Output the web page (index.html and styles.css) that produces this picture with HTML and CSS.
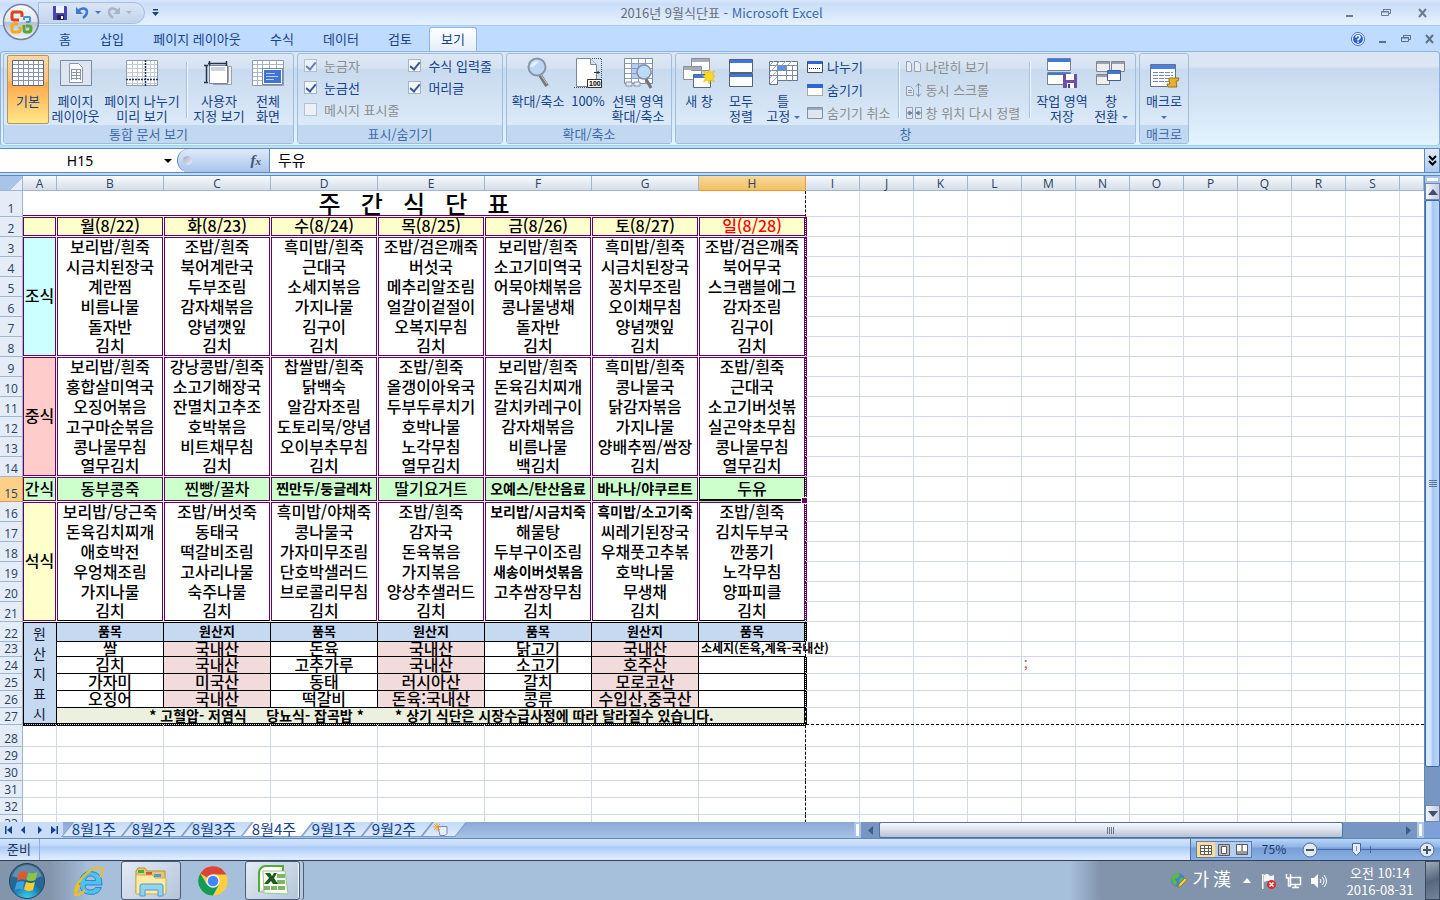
FILE: index.html
```html
<!DOCTYPE html>
<html lang="ko">

<head>
    <meta charset="UTF-8">
    <meta name="viewport" content="width=device-width, initial-scale=1.0">
    <title>2016년 9월식단표 - Microsoft Excel</title>
    <link rel="stylesheet" href="styles.css">
</head>

<body>
    <!-- title bar -->
    <header class="titlebar">
        <button class="office" aria-label="Office">
            <svg width="38" height="38" viewBox="0 0 38 38">
                <defs>
                    <linearGradient id="orb" x1="0" y1="0" x2="0" y2="1">
                        <stop offset="0" stop-color="#fdfdfe"/><stop offset=".48" stop-color="#dfe4ec"/>
                        <stop offset=".52" stop-color="#b4bfd0"/><stop offset="1" stop-color="#f4f7fb"/>
                    </linearGradient>
                </defs>
                <circle cx="19" cy="19" r="17.5" fill="url(#orb)" stroke="#75839c" stroke-width="1.5"/>
                <g fill="none" stroke-width="3">
                    <path d="M17 17h-5q-2 0-2-2v-4q0-2 2-2h6q2 0 2 2v3" stroke="#d9431a"/>
                    <path d="M22 17v-2q0-1 1-1h4q1 0 1 1v3q0 1-1 1h-3" stroke="#3b93d8" stroke-width="2"/>
                    <path d="M16 21h-4q-2 0-2 2v4q0 2 2 2h4q2 0 2-2v-3" stroke="#f0ab22"/>
                    <path d="M22 22v4q0 3 2 3h2q3 0 3-3v-1q0-2-2-2h-3" stroke="#5ca532"/>
                </g>
            </svg>
        </button>
        <div class="quick">
            <button aria-label="저장">
                <svg width="14" height="14" viewBox="0 0 14 14"><path d="M0 0h13l1 1v13H0z" fill="#4a45ae"/><path d="M3 0h8v7H3z" fill="#eef3ff"/><path d="M4 9h7v5H4z" fill="#22264f"/><path d="M8 10h2v3H8z" fill="#fff"/></svg>
            </button>
            <button aria-label="실행 취소">
                <svg width="13" height="13" viewBox="0 0 13 13"><path d="M2 5C6 1 11 2 11 6q0 3-4 6" fill="none" stroke="#3f78cf" stroke-width="2.5"/><path d="M0 1v7h7z" fill="#3f78cf"/></svg>
            </button>
            <span class="caret"></span>
            <button aria-label="다시 실행">
                <svg width="13" height="13" viewBox="0 0 13 13"><path d="M11 5C7 1 2 2 2 6q0 3 4 6" fill="none" stroke="#a9b6c8" stroke-width="2.5"/><path d="M13 1v7H6z" fill="#a9b6c8"/></svg>
            </button>
            <span class="caret off"></span>
        </div>
        <svg class="more" width="7" height="8" viewBox="0 0 7 8"><path d="M1 0h5v1.500H1zM0 3h7L3.500 7z" fill="#1c4079"/></svg>
        <h1 class="doc-title"><span>2016년 9월식단표</span> - Microsoft Excel</h1>
        <div class="win-buttons">
            <button aria-label="최소화"><svg width="8" height="12"><path d="M0 8h7v2H0z" fill="#6b7b93"/></svg></button>
            <button aria-label="이전 크기로"><svg width="10" height="12" fill="none" stroke="#6b7b93"><path d="M2.500 4V2.500h7v4H8M2 2.500h8M.500 4.500h7v4h-7zM0 5h8"/></svg></button>
            <button aria-label="닫기"><svg width="9" height="12"><path d="M1 2l7 8M8 2l-7 8" stroke="#6b7b93" stroke-width="2"/></svg></button>
        </div>
    </header>

    <!-- ribbon tabs -->
    <nav class="tabs">
        <button class="tab home">홈</button>
        <button class="tab insert">삽입</button>
        <button class="tab layout">페이지 레이아웃</button>
        <button class="tab formula">수식</button>
        <button class="tab data">데이터</button>
        <button class="tab review">검토</button>
        <button class="tab active">보기</button>
        <div class="doc-buttons">
            <button aria-label="도움말"><svg width="14" height="14" viewBox="0 0 14 14"><circle cx="7" cy="7" r="6.500" fill="#fff" stroke="#3a6cc8"/><circle cx="7" cy="7" r="5" fill="#2a62d0"/><path d="M5 5.500Q5 3.500 7 3.500T9 5.500Q9 6.500 7 7.500V8.500M7 9.500V11" fill="none" stroke="#fff" stroke-width="1.500"/></svg></button>
            <button aria-label="문서 최소화"><svg width="8" height="12"><path d="M0 8h7v2H0z" fill="#5f6f87"/></svg></button>
            <button aria-label="문서 이전 크기로"><svg width="10" height="12" fill="none" stroke="#5f6f87"><path d="M2.500 4V2.500h7v4H8M2 2.500h8M.500 4.500h7v4h-7zM0 5h8"/></svg></button>
            <button aria-label="문서 닫기"><svg width="9" height="12"><path d="M1 2l7 8M8 2l-7 8" stroke="#5f6f87" stroke-width="2"/></svg></button>
        </div>
    </nav>

    <!-- ribbon -->
    <section class="ribbon">
        <div class="group g-views">
            <div class="tools">
                <button class="big w42 on">
                    <svg width="32" height="32" viewBox="0 0 32 32"><path d="M.500 3.500h31v25H.500z" fill="#fff" stroke="#56657d"/><path d="M1 7.500h30M1 11.500h30M1 15.500h30M1 19.500h30M1 23.500h30M6.500 4v24M11.500 4v24M16.500 4v24M21.500 4v24M26.500 4v24" stroke="#8494ac" fill="none"/></svg>
                    <span>기본</span>
                </button>
                <button class="big w53">
                    <svg width="32" height="32" viewBox="0 0 32 32"><path d="M.500 3.500h31v25H.500z" fill="#dde5f0" stroke="#7c8aa0"/><path d="M9.500 6.500h9l4 4v15h-13z" fill="#fff" stroke="#8a97ab"/><path d="M11 12.500h10M11 15.500h10M11 18.500h10M11 21.500h10M11.500 12v11M16.500 12v11M20.500 12v11" stroke="#8795ab"/></svg>
                    <span>페이지<br>레이아웃</span>
                </button>
                <button class="big w80">
                    <svg width="32" height="32" viewBox="0 0 32 32"><path d="M.500 3.500h31v25H.500z" fill="#fff" stroke="#8e9bb0"/><path d="M1 7.500h30M1 11.500h30M1 15.500h30M1 19.500h30M1 26.500h30M6.500 4v24M11.500 4v24M16.500 4v24M24.500 4v24M28.500 4v24" stroke="#c0c9d6"/><path d="M19.500 3v26M0 22.500h32" stroke="#1f3050" stroke-dasharray="2 1" stroke-width="1.500"/></svg>
                    <span>페이지 나누기<br>미리 보기</span>
                </button>
                <i class="sep"></i>
                <button class="big w54">
                    <svg width="32" height="32" viewBox="0 0 32 32"><path d="M10.500 9.500h18v18h-18zM7.500 9.500h18v16" fill="#f2f2f4" stroke="#9a9fa8"/><path d="M6.500 8.500h18v18h-18z" fill="#fff" stroke="#7a8496"/><path d="M8 10h14v4H8z" fill="#c9d3e2"/><path d="M5 6.500h19M6.500 4v5M23.500 4v5M3.500 8v18M1 8.500h4M1 25.500h4" stroke="#26344e" stroke-width="1.500"/></svg>
                    <span>사용자<br>지정 보기</span>
                </button>
                <button class="big w44">
                    <svg width="32" height="32" viewBox="0 0 32 32"><path d="M.500 3.500h31v25H.500z" fill="#fff" stroke="#8e9bb0"/><path d="M1 7.500h30M1 11.500h30M1 15.500h30M1 19.500h30M1 23.500h30M5.500 4v24M10.500 4v24M17.500 4v24M24.500 4v24" stroke="#a9b4c6"/><path d="M10.500 11.500h20v16h-20z" fill="#fff" stroke="#7589ac"/><path d="M12 13h17v13H12z" fill="#3e74d6"/><path d="M14 16.500h9M14 19.500h12M14 22.500h8" stroke="#b9d0f8"/></svg>
                    <span>전체<br>화면</span>
                </button>
            </div>
            <h2>통합 문서 보기</h2>
        </div>

        <div class="group g-show">
            <div class="tools checks">
                <div>
                    <label class="off"><input type="checkbox" checked disabled>눈금자</label>
                    <label><input type="checkbox" checked>눈금선</label>
                    <label class="off"><input type="checkbox" disabled>메시지 표시줄</label>
                </div>
                <div>
                    <label><input type="checkbox" checked>수식 입력줄</label>
                    <label><input type="checkbox" checked>머리글</label>
                </div>
            </div>
            <h2>표시/숨기기</h2>
        </div>

        <div class="group g-zoom">
            <div class="tools">
                <button class="big w60">
                    <svg width="32" height="32" viewBox="0 0 32 32"><path d="M18 18l7 11" stroke="#77787c" stroke-width="4"/><path d="M19 18l6 9" stroke="#c6c7ca"/><circle cx="15" cy="10" r="8.500" fill="#bcd7f3" stroke="#8996a8" stroke-width="2"/><path d="M8 10q2-7 9-6-5 7-9 6z" fill="#fff" opacity=".6"/></svg>
                    <span>확대/축소</span>
                </button>
                <button class="big w40">
                    <svg width="32" height="32" viewBox="0 0 32 32"><path d="M4.500 1.500h14l6 6v22h-20z" fill="#fff" stroke="#7d8798"/><path d="M18.500 1.500v6h6" fill="#dbe1ea" stroke="#7d8798"/><path d="M20 1.500h9.500v29M2 30.500h14" fill="none" stroke="#444f66" stroke-dasharray="1 1"/><path d="M22 15.500h6M26 14v3" stroke="#333"/><path d="M15.500 22.500h14v8h-14z" fill="#fff" stroke="#333"/><text x="17" y="29" font-family="Liberation Sans" font-size="7" font-weight="700">100</text></svg>
                    <span>100%</span>
                </button>
                <button class="big w60">
                    <svg width="32" height="32" viewBox="0 0 32 32"><path d="M2.500 1.500h28v25h-28z" fill="#fff" stroke="#7f8da4"/><path d="M10 7h13v14H10z" fill="#b4cdf7"/><path d="M3 6.500h27M3 11.500h27M3 16.500h27M3 21.500h27M9.500 2v25M16.500 2v25M23.500 2v25" stroke="#8c9bb8"/><path d="M4 25h6v4H4zM12 25h6v4h-6z" fill="#e9edf3" stroke="#8390a5"/><path d="M24 22l5 9" stroke="#707278" stroke-width="3"/><circle cx="22" cy="15" r="7" fill="#bcd9f5" stroke="#8391a5" stroke-width="1.500"/></svg>
                    <span>선택 영역<br>확대/축소</span>
                </button>
            </div>
            <h2>확대/축소</h2>
        </div>

        <div class="group g-window">
            <div class="tools">
                <button class="big w44">
                    <svg width="32" height="32" viewBox="0 0 32 32"><path d="M8.500 1.500h18v12h-18zM.500 9.500h18v13H.500z" fill="#fff" stroke="#8b919c"/><path d="M9 2h17v3H9zM1 10h17v3H1z" fill="#a5acb8"/><path d="M10.500 17.500h17v13h-17z" fill="#fff" stroke="#56698c"/><path d="M11 18h16v3H11z" fill="#3e78dc"/><path d="M26 12l1.500 4 4-2-2 4 3 1-3 2 2 4-4-2-1.500 4-1.500-4-4 2 2-4-3-2 3-1-2-4 4 2z" fill="#ffd91c" stroke="#e2ac0c" stroke-width=".5"/></svg>
                    <span>새 창</span>
                </button>
                <button class="big w40">
                    <svg width="32" height="32" viewBox="0 0 32 32"><path d="M4.500 2.500h23v13h-23zM4.500 16.500h23v13h-23z" fill="#fff" stroke="#50617e"/><path d="M5 3h22v3H5zM5 17h22v3H5z" fill="#3e78dc"/></svg>
                    <span>모두<br>정렬</span>
                </button>
                <button class="big w44">
                    <svg width="32" height="32" viewBox="0 0 32 32"><path d="M2.500 4.500h28v19h-20v4h-8z" fill="#fff" stroke="#68768d"/><path d="M11 9h8v4h-8z" fill="#5e90e6"/><path d="M3 8.500h27M3 13.500h27M3 18.500h27M10.500 5v19M19.500 8v16M25.500 8v16" stroke="#7e8ba0"/><path d="M3 8l4-4M9 8l4-4M15 8l4-4M21 8l4-4M3 15l7-7M3 21l7-7M3 27l7-7" stroke="#9cb0d4"/></svg>
                    <span>틀<br>고정 <i class="caret"></i></span>
                </button>
                <div class="small-col first">
                    <button><svg width="16" height="14"><path d="M.500 1.500h15v11H.500z" fill="#fff" stroke="#3d5070"/><path d="M1 1h14v3H1z" fill="#2d66d2"/><path d="M2 8.500h12" stroke="#222" stroke-dasharray="1 1"/></svg>나누기</button>
                    <button><svg width="16" height="14"><path d="M.500 1.500h15v11H.500z" fill="#fff" stroke="#666" stroke-dasharray="1 1"/><path d="M0 1h16v4H0z" fill="#2d66d2"/></svg>숨기기</button>
                    <button disabled><svg width="16" height="14"><path d="M.500 1.500h15v11H.500z" fill="#dfe6ef" stroke="#8290a6"/><path d="M1 2h14v2H1z" fill="#9aa9be"/></svg>숨기기 취소</button>
                </div>
                <i class="sep"></i>
                <div class="small-col second">
                    <button disabled><svg width="16" height="14"><path d="M.500 1.500h3l2 2v8h-5zM8.500 1.500h3l3 2v8h-6z" fill="#e8edf4" stroke="#93a1b6"/></svg>나란히 보기</button>
                    <button disabled><svg width="16" height="14"><path d="M.500 3.500h4l3 3v6h-7z" fill="#e0e6ef" stroke="#93a1b6"/><path d="M2 7.500h4M2 9.500h4M12.500 1v12M10 3.500l2.500-3 2.500 3M10 10.500l2.500 3 2.500-3" fill="none" stroke="#8796ae"/></svg>동시 스크롤</button>
                    <button disabled><svg width="16" height="14"><path d="M.500 1.500h6v11h-6zM9.500 1.500h6v11h-6z" fill="#e0e6ef" stroke="#93a1b6"/><path d="M1 7h4M3 5l3 2-3 2zM15 7h-4M13 5l-3 2 3 2z" stroke="#71819a" fill="#71819a"/></svg>창 위치 다시 정렬</button>
                </div>
                <i class="sep"></i>
                <button class="big w54">
                    <svg width="32" height="32" viewBox="0 0 32 32"><path d="M1.500 1.500h23v12h-23zM1.500 15.500h23v12h-23z" fill="#fff" stroke="#6f7f9c"/><path d="M2 2h22v3H2zM2 16h22v2H2z" fill="#3e78dc"/><path d="M17 17h14v14H17z" fill="#6c50a8"/><path d="M20 17h8v6h-8z" fill="#fff"/><path d="M21 26h7v5h-7z" fill="#fff"/><path d="M22 27h2v4h-2z" fill="#4d3689"/></svg>
                    <span>작업 영역<br>저장</span>
                </button>
                <button class="big w44">
                    <svg width="32" height="32" viewBox="0 0 32 32"><path d="M1.500 4.500h13v10h-13zM16.500 4.500h13v10h-13zM1.500 17.500h13v10h-13z" fill="#eeeef0" stroke="#81858e"/><path d="M2 5h12v2H2zM17 5h12v2H17zM2 18h12v2H2z" fill="#9b9fa8"/><path d="M12.500 13.500h13v10h-13z" fill="#fff" stroke="#4a5f88"/><path d="M13 14h12v3H13z" fill="#3e78dc"/></svg>
                    <span>창<br>전환 <i class="caret"></i></span>
                </button>
            </div>
            <h2>창</h2>
        </div>

        <div class="group g-macro">
            <div class="tools">
                <button class="big w42">
                    <svg width="32" height="32" viewBox="0 0 32 32"><path d="M2.500 7.500h25v22h-25z" fill="#fff" stroke="#63718a"/><path d="M3 8h24v4H3z" fill="#4a80e0"/><path d="M5 15.500h20M5 18.500h20M5 21.500h20M5 24.500h20" stroke="#7388b0" stroke-dasharray="5 1"/><path d="M21 21h10l-1 3h-2l1 6h-9l-1-3h3l-1-3z" fill="#e3b52e" stroke="#9c741a"/></svg>
                    <span>매크로<br><i class="caret"></i></span>
                </button>
            </div>
            <h2>매크로</h2>
        </div>
    </section>

    <!-- formula bar -->
    <section class="formula-bar">
        <div class="name-box"><input type="text" value="H15" aria-label="이름 상자"><i class="caret black"></i></div>
        <div class="fx"><i class="dot"></i><em>f<small>x</small></em></div>
        <input class="formula-input" type="text" value="두유" aria-label="수식 입력줄">
        <button class="expand" aria-label="확장"><svg width="9" height="11" fill="none" stroke="#000" stroke-width="2"><path d="M1 1l3.500 3.500L8 1M1 6l3.500 3.500L8 6"/></svg></button>
    </section>

    <!-- worksheet -->
    <main class="workspace">
        <div class="sheet">
            <table>
                <colgroup>
                    <col class="c-num"><col class="c-a">
                    <col class="c-day"><col class="c-day"><col class="c-day"><col class="c-day"><col class="c-day"><col class="c-day"><col class="c-day">
                    <col class="c-n"><col class="c-n"><col class="c-n"><col class="c-n"><col class="c-n"><col class="c-n"><col class="c-n"><col class="c-n"><col class="c-n"><col class="c-n"><col class="c-n">
                    <col>
                </colgroup>
                <thead>
                    <tr><th class="corner"></th><th>A</th><th>B</th><th>C</th><th>D</th><th>E</th><th>F</th><th>G</th><th class="sel">H</th><th>I</th><th>J</th><th>K</th><th>L</th><th>M</th><th>N</th><th>O</th><th>P</th><th>Q</th><th>R</th><th>S</th><th></th></tr>
                </thead>
                <tbody>
                    <tr class="r-title"><th>1</th><td colspan="8" class="title">주   간   식   단   표</td><td colspan="12" class="rest"></td></tr>
                    <tr class="r-days"><th>2</th><td></td><td>월(8/22)</td><td>화(8/23)</td><td>수(8/24)</td><td>목(8/25)</td><td>금(8/26)</td><td>토(8/27)</td><td class="sun">일(8/28)</td><td colspan="12" class="rest"></td></tr>

                    <tr class="m first"><th>3</th><td rowspan="6" class="meal breakfast">조식</td><td>보리밥/흰죽</td><td>조밥/흰죽</td><td>흑미밥/흰죽</td><td>조밥/검은깨죽</td><td>보리밥/흰죽</td><td>흑미밥/흰죽</td><td>조밥/검은깨죽</td><td colspan="12" class="rest"></td></tr>
                    <tr class="m"><th>4</th><td>시금치된장국</td><td>북어계란국</td><td>근대국</td><td>버섯국</td><td>소고기미역국</td><td>시금치된장국</td><td>북어무국</td><td colspan="12" class="rest"></td></tr>
                    <tr class="m"><th>5</th><td>계란찜</td><td>두부조림</td><td>소세지볶음</td><td>메추리알조림</td><td>어묵야채볶음</td><td>꽁치무조림</td><td>스크램블에그</td><td colspan="12" class="rest"></td></tr>
                    <tr class="m"><th>6</th><td>비름나물</td><td>감자채볶음</td><td>가지나물</td><td>얼갈이겉절이</td><td>콩나물냉채</td><td>오이채무침</td><td>감자조림</td><td colspan="12" class="rest"></td></tr>
                    <tr class="m"><th>7</th><td>돌자반</td><td>양념깻잎</td><td>김구이</td><td>오복지무침</td><td>돌자반</td><td>양념깻잎</td><td>김구이</td><td colspan="12" class="rest"></td></tr>
                    <tr class="m last"><th>8</th><td>김치</td><td>김치</td><td>김치</td><td>김치</td><td>김치</td><td>김치</td><td>김치</td><td colspan="12" class="rest"></td></tr>

                    <tr class="m first"><th>9</th><td rowspan="6" class="meal lunch">중식</td><td>보리밥/흰죽</td><td>강낭콩밥/흰죽</td><td>찹쌀밥/흰죽</td><td>조밥/흰죽</td><td>보리밥/흰죽</td><td>흑미밥/흰죽</td><td>조밥/흰죽</td><td colspan="12" class="rest"></td></tr>
                    <tr class="m"><th>10</th><td>홍합살미역국</td><td>소고기해장국</td><td>닭백숙</td><td>올갱이아욱국</td><td>돈육김치찌개</td><td>콩나물국</td><td>근대국</td><td colspan="12" class="rest"></td></tr>
                    <tr class="m"><th>11</th><td>오징어볶음</td><td>잔멸치고추조</td><td>알감자조림</td><td>두부두루치기</td><td>갈치카레구이</td><td>닭감자볶음</td><td>소고기버섯볶</td><td colspan="12" class="rest"></td></tr>
                    <tr class="m"><th>12</th><td>고구마순볶음</td><td>호박볶음</td><td>도토리묵/양념</td><td>호박나물</td><td>감자채볶음</td><td>가지나물</td><td>실곤약초무침</td><td colspan="12" class="rest"></td></tr>
                    <tr class="m"><th>13</th><td>콩나물무침</td><td>비트채무침</td><td>오이부추무침</td><td>노각무침</td><td>비름나물</td><td>양배추찜/쌈장</td><td>콩나물무침</td><td colspan="12" class="rest"></td></tr>
                    <tr class="m last"><th>14</th><td>열무김치</td><td>김치</td><td>김치</td><td>열무김치</td><td>백김치</td><td>김치</td><td>열무김치</td><td colspan="12" class="rest"></td></tr>

                    <tr class="r-snack"><th class="sel">15</th><td>간식</td><td>동부콩죽</td><td>찐빵/꿀차</td><td class="narrow">찐만두/둥글레차</td><td>딸기요거트</td><td class="narrow">오예스/탄산음료</td><td class="narrow">바나나/야쿠르트</td><td class="cursor">두유</td><td colspan="12" class="rest"></td></tr>

                    <tr class="m first"><th>16</th><td rowspan="6" class="meal dinner">석식</td><td>보리밥/당근죽</td><td>조밥/버섯죽</td><td>흑미밥/야채죽</td><td>조밥/흰죽</td><td class="narrow">보리밥/시금치죽</td><td class="narrow">흑미밥/소고기죽</td><td>조밥/흰죽</td><td colspan="12" class="rest"></td></tr>
                    <tr class="m"><th>17</th><td>돈육김치찌개</td><td>동태국</td><td>콩나물국</td><td>감자국</td><td>해물탕</td><td>씨레기된장국</td><td>김치두부국</td><td colspan="12" class="rest"></td></tr>
                    <tr class="m"><th>18</th><td>애호박전</td><td>떡갈비조림</td><td>가자미무조림</td><td>돈육볶음</td><td>두부구이조림</td><td>우채풋고추볶</td><td>깐풍기</td><td colspan="12" class="rest"></td></tr>
                    <tr class="m"><th>19</th><td>우엉채조림</td><td>고사리나물</td><td>단호박샐러드</td><td>가지볶음</td><td class="narrow">새송이버섯볶음</td><td>호박나물</td><td>노각무침</td><td colspan="12" class="rest"></td></tr>
                    <tr class="m"><th>20</th><td>가지나물</td><td>숙주나물</td><td>브로콜리무침</td><td>양상추샐러드</td><td>고추쌈장무침</td><td>무생채</td><td>양파피클</td><td colspan="12" class="rest"></td></tr>
                    <tr class="m last end"><th>21</th><td>김치</td><td>김치</td><td>김치</td><td>김치</td><td>김치</td><td>김치</td><td>김치</td><td colspan="12" class="rest"></td></tr>

                    <tr class="o r-origin"><th>22</th><td rowspan="6" class="origin">원<br>산<br>지<br>표<br>시</td><td>품목</td><td>원산지</td><td>품목</td><td>원산지</td><td>품목</td><td>원산지</td><td class="edge">품목</td><td colspan="12" class="rest"></td></tr>
                    <tr class="o short"><th>23</th><td>쌀</td><td class="pink">국내산</td><td>돈육</td><td class="pink">국내산</td><td>닭고기</td><td class="pink">국내산</td><td class="spill">소세지(돈육,계육-국내산)</td><td colspan="12" class="rest"></td></tr>
                    <tr class="o low"><th>24</th><td>김치</td><td class="pink">국내산</td><td>고추가루</td><td class="pink">국내산</td><td>소고기</td><td class="pink">호주산</td><td class="edge"></td><td colspan="4" class="rest"></td><td class="rest semi">;</td><td colspan="7" class="rest"></td></tr>
                    <tr class="o low"><th>25</th><td>가자미</td><td class="pink">미국산</td><td>동태</td><td class="pink">러시아산</td><td>갈치</td><td class="pink">모로코산</td><td class="edge"></td><td colspan="12" class="rest"></td></tr>
                    <tr class="o low"><th>26</th><td>오징어</td><td class="pink">국내산</td><td>떡갈비</td><td class="pink">돈육:국내산</td><td>콩류</td><td class="pink">수입산,중국산</td><td class="edge"></td><td colspan="12" class="rest"></td></tr>
                    <tr class="o low r-note"><th>27</th><td colspan="7" class="note">* 고혈압- 저염식     당뇨식- 잡곡밥 *        * 상기 식단은 시장수급사정에 따라 달라질수 있습니다.</td><td colspan="12" class="rest"></td></tr>

                    <tr class="tall"><th>28</th><td></td><td></td><td></td><td></td><td></td><td></td><td></td><td></td><td colspan="12" class="rest"></td></tr>
                    <tr class="low"><th>29</th><td></td><td></td><td></td><td></td><td></td><td></td><td></td><td></td><td colspan="12" class="rest"></td></tr>
                    <tr class="low"><th>30</th><td></td><td></td><td></td><td></td><td></td><td></td><td></td><td></td><td colspan="12" class="rest"></td></tr>
                    <tr class="low"><th>31</th><td></td><td></td><td></td><td></td><td></td><td></td><td></td><td></td><td colspan="12" class="rest"></td></tr>
                    <tr class="low"><th>32</th><td></td><td></td><td></td><td></td><td></td><td></td><td></td><td></td><td colspan="12" class="rest"></td></tr>
                    <tr class="low"><th>33</th><td></td><td></td><td></td><td></td><td></td><td></td><td></td><td></td><td colspan="12" class="rest"></td></tr>
                </tbody>
            </table>
        </div>
        <div class="vscroll">
            <i class="split"></i>
            <button aria-label="위로"><svg width="10" height="6"><path d="M0 6l5-6 5 6z" fill="#3f4f70"/></svg></button>
            <div class="thumb"><i></i></div>
            <div class="track"></div>
            <button aria-label="아래로"><svg width="10" height="6"><path d="M0 0l5 6 5-6z" fill="#3f4f70"/></svg></button>
        </div>
    </main>

    <!-- sheet tabs + horizontal scroll -->
    <section class="bottom-bar">
        <div class="nav-arrows">
            <button aria-label="첫 시트"><svg width="7" height="8"><path d="M0 0h1.500v8H0zM7 0v8L2 4z" fill="#15428b"/></svg></button>
            <button aria-label="이전 시트"><svg width="7" height="8"><path d="M5 0v8L1 4z" fill="#15428b"/></svg></button>
            <button aria-label="다음 시트"><svg width="7" height="8"><path d="M2 0v8l4-4z" fill="#15428b"/></svg></button>
            <button aria-label="마지막 시트"><svg width="7" height="8"><path d="M5.500 0H7v8H5.500zM0 0v8l5-4z" fill="#15428b"/></svg></button>
        </div>
        <div class="sheet-tabs">
            <button>8월1주</button>
            <button>8월2주</button>
            <button>8월3주</button>
            <button class="active">8월4주</button>
            <button>9월1주</button>
            <button>9월2주</button>
            <button class="new" aria-label="워크시트 삽입"><svg width="16" height="13" viewBox="0 0 16 13"><path d="M5 3.500h9v7l-2 2H7z" fill="#e9eff9" stroke="#7787a5"/><path d="M4 0v8M0 4h8M1 1l6 6M7 1L1 7" stroke="#f0a02a"/></svg></button>
        </div>
        <div class="hscroll">
            <i class="split"></i>
            <button aria-label="왼쪽"><svg width="5" height="9"><path d="M5 0v9L0 4.500z" fill="#3f5a8c"/></svg></button>
            <div class="thumb"><i></i></div>
            <div class="track"></div>
            <button aria-label="오른쪽"><svg width="5" height="9"><path d="M0 0v9l5-4.500z" fill="#3f5a8c"/></svg></button>
            <i class="split"></i>
        </div>
    </section>

    <!-- status bar -->
    <section class="status">
        <span class="ready">준비</span>
        <div class="status-right">
            <div class="view-buttons">
                <button class="on" aria-label="기본"><svg width="12" height="10" fill="#fff" stroke="#5a5a5a"><path d="M.500.500h11v9H.500zM0 3.500h12M0 6.500h12M4.500 0v10M8.500 0v10"/></svg></button>
                <button aria-label="페이지 레이아웃"><svg width="12" height="12" fill="#fff" stroke="#5a5a5a"><path d="M.500.500h11v11H.500z" fill="#bbb"/><path d="M3.500 2.500h5v7h-5z"/></svg></button>
                <button aria-label="페이지 나누기"><svg width="12" height="11"><path d="M.500.500h11v10H.500z" fill="#999" stroke="#5a5a5a"/><path d="M1 1h4v6H1zM7 1h4v6H7z" fill="#fff"/></svg></button>
            </div>
            <button class="percent">75%</button>
            <button class="round" aria-label="축소">
                <svg width="16" height="16"><circle cx="8" cy="8" r="7" fill="#e3eaf4" stroke="#4c6a99"/><path d="M4 7h8v2H4z" fill="#47566e"/></svg>
            </button>
            <div class="zoom-slider">
                <svg width="9" height="13"><path d="M.500.500h8v8l-4 4-4-4z" fill="#e3eefc" stroke="#48689b"/><path d="M4.500 3v5" stroke="#7b93bb"/></svg>
                <i></i>
            </div>
            <button class="round" aria-label="확대">
                <svg width="16" height="16"><circle cx="8" cy="8" r="7" fill="#e3eaf4" stroke="#4c6a99"/><path d="M4 7h8v2H4zM7 4h2v8H7z" fill="#47566e"/></svg>
            </button>
        </div>
    </section>

    <!-- taskbar -->
    <footer class="taskbar">
        <button class="start" aria-label="시작">
            <svg width="38" height="38" viewBox="0 0 38 38">
                <defs><radialGradient id="win" cx=".5" cy="1" r=".95"><stop offset="0" stop-color="#35d6f5"/><stop offset=".5" stop-color="#1b6a9c"/><stop offset="1" stop-color="#3a668b"/></radialGradient></defs>
                <circle cx="19" cy="19" r="17.500" fill="url(#win)" stroke="#23435f"/>
                <path d="M4 14Q9 3 19 3t15 11Q19 21 4 14z" fill="#fff" opacity=".25"/>
                <path d="M11 11q4-3 8-1l-2 8q-4-2-8 1z" fill="#e8552a"/><path d="M20.500 10.500q4 2 9-.5l-2 8q-5 2-9 0z" fill="#8cc63c"/>
                <path d="M8.500 20.500q4-2 8-1l-2 8q-4-2-8 1z" fill="#3fa0e4"/><path d="M18 20q5 2 9 0l-2 8q-5 2-9-.5z" fill="#fcca2f"/>
            </svg>
        </button>
        <button class="task" aria-label="Internet Explorer">
            <svg width="32" height="32" viewBox="0 0 32 32"><path d="M29 20H12q0 5 5.500 5 3.500 0 5-2.500h6Q26 29.500 17.500 29.500 6.500 29 6.500 18 7 6.500 18 6.500 29.500 7 29 20zM12.500 15.500h10Q22 11 17.500 11t-5 4.500z" fill="#4fc0f2" stroke="#1c78c0" stroke-width=".8" fill-rule="evenodd"/><path d="M7 20Q0 31 3 30q5 0 9-5M4 28Q-1 26 9 13 20 1 28 3q4 2-1 9" fill="none" stroke="#f2bd1d" stroke-width="2.200"/></svg>
        </button>
        <button class="task open" aria-label="탐색기">
            <svg width="34" height="32" viewBox="0 0 34 32"><path d="M2 6l2-3h7l2 3h18v22H2z" fill="#e8c766" stroke="#b5903c"/><path d="M4 5h6v3H4z" fill="#35b54a"/><path d="M12 7h6v3h-6z" fill="#dd5236"/><path d="M20 9h7v3h-7z" fill="#4b9be0"/><path d="M2 10h16l3 3h11v16H2z" fill="#fbe9a5" stroke="#cfae58"/><path d="M6 31V21q0-2 2-2h19q2 0 2 2v10h-5v-6H11v6z" fill="#93d3ee" stroke="#4c9cc8"/></svg>
        </button>
        <button class="task" aria-label="Chrome">
            <svg width="30" height="30" viewBox="0 0 30 30"><circle cx="15" cy="15" r="14.600" fill="#ffcd40"/><path d="M15 15L2.300 7.600A14.600 14.600 0 0 1 27.700 7.600L28 8.500H15z" fill="#db4437"/><path d="M2.300 7.600A14.600 14.600 0 0 0 15 29.600L21 18.500 15 15 9 18.500z" fill="#0f9d58"/><circle cx="15" cy="15" r="6.800" fill="#f4f4f4"/><circle cx="15" cy="15" r="5.300" fill="#4285f4"/></svg>
        </button>
        <button class="task open stacked" aria-label="Excel">
            <svg width="32" height="32" viewBox="0 0 32 32"><path d="M2 27V7q1-5 6-6h18v8" fill="#fff" stroke="#52ad32" stroke-width="2"/><path d="M2 27h5M6 6h22l3 23-24-1z" fill="#f5faf2" stroke="#9ec48c"/><path d="M20 9h8v4h-8zM20 15h8v4h-8zM7 21h6v4H7zM14 21h6v4h-6zM21 21h7v4h-7z" fill="#7fb567"/><path d="M8 8h5l2 3 2-3h3l-3 5 4 6h-5l-2-3-3 3H7l5-6z" fill="#1d5a1f"/></svg>
        </button>
        <div class="tray">
            <svg width="18" height="18" viewBox="0 0 18 18"><circle cx="8" cy="8" r="7" fill="#3f87c4"/><path d="M2 4q4-5 8-2l-2 4-3 1 2 4-2 3Q0 10 2 4zM11 5l3 2-3 4-2-2z" fill="#5eb648"/><path d="M8 16l1-4 6-6 2 2-6 6z" fill="#f0c93c" stroke="#8a6415" stroke-width=".6"/></svg>
            <span class="ime">가</span><span class="ime">漢</span>
            <svg class="up" width="8" height="5"><path d="M4 0l4 5H0z" fill="#fff"/></svg>
            <svg width="16" height="16" viewBox="0 0 16 16"><path d="M1 1h1.500v15H1z" fill="#fff"/><path d="M3 2q4-2 5 0t5 0v7q-4 2-5 0t-5 0z" fill="#f3f4f6"/><circle cx="10.500" cy="11.500" r="4.500" fill="#d92b25"/><path d="M8.500 9.500l4 4M12.500 9.500l-4 4" stroke="#fff" stroke-width="1.500"/></svg>
            <svg width="17" height="16" viewBox="0 0 17 16" fill="none" stroke="#fff"><path d="M5.500 4.500h10v7h-10zM7 14.500h7M10.500 12v2M1.500 1v4h4V1M3.500 5v8H6" stroke-width="1.500"/></svg>
            <svg width="17" height="16" viewBox="0 0 17 16"><path d="M1 5h3l4-4v14l-4-4H1z" fill="#fff"/><path d="M10 6q2 2 0 4M12 4q4 4 0 8M14 2q5 6 0 12" fill="none" stroke="#fff"/></svg>
            <div class="clock">오전 10:14<br>2016-08-31</div>
            <button class="desktop" aria-label="바탕 화면 보기"></button>
        </div>
    </footer>
</body>

</html>
```
FILE: styles.css
```css
* {
    box-sizing: border-box;
}

body {
    margin: 0;
    height: 100vh;
    display: flex;
    flex-direction: column;
    overflow: hidden;
    background: #bfdbff;
    color: #15428b;
    font-family: "Noto Sans CJK KR", "Noto Sans", sans-serif;
    font-size: 13px;
    line-height: 15px;
}

button {
    margin: 0;
    padding: 0;
    border: 0;
    background: none;
    color: inherit;
    font: inherit;
    white-space: nowrap;
}

svg {
    display: block;
    flex: none;
}

h1, h2 {
    margin: 0;
    font-size: 13px;
    font-weight: 400;
}

.caret {
    display: inline-block;
    border: 3px solid transparent;
    border-top-color: #4a72b0;
    border-bottom: 0;
}

.caret.off {
    border-top-color: #a9b6c8;
}

.caret.black {
    border-width: 4px 4px 0;
    border-top-color: #000;
}

/* title bar */
.titlebar {
    flex: none;
    display: flex;
    align-items: center;
    height: 26px;
    background: linear-gradient(#d8e7fb 0, #cadef7 4px, #e4f0ff 24px);
    border-bottom: 1px solid #a9caf5;
    position: relative;
}

.office {
    position: absolute;
    left: 2px;
    top: 3px;
    z-index: 2;
}

.quick {
    display: flex;
    align-items: center;
    gap: 6px;
    height: 22px;
    margin-left: 38px;
    padding: 0 12px 0 14px;
    background: linear-gradient(#d9e5f4, #c3d5ec);
    border: 1px solid #a3bfe2;
    border-radius: 0 11px 11px 0;
}

.quick button + button {
    margin-left: 3px;
}

.more {
    margin-left: 7px;
}

.doc-title {
    flex: 1;
    margin-right: 62px;
    text-align: center;
    color: #3e6aaa;
}

.doc-title span {
    color: #69707a;
}

.win-buttons {
    display: flex;
    gap: 27px;
    margin-right: 13px;
}

/* ribbon tabs */
.tabs {
    flex: none;
    display: flex;
    align-items: flex-end;
    height: 25px;
    padding-left: 45px;
}

.tab {
    height: 24px;
    padding-bottom: 2px;
    border: 1px solid transparent;
    border-bottom: 0;
}

.tab.home { width: 40px; }
.tab.insert { width: 54px; }
.tab.layout { width: 116px; }
.tab.formula { width: 54px; }
.tab.data { width: 64px; }
.tab.review { width: 54px; }

.tab.active {
    width: 48px;
    margin-left: 2px;
    background: linear-gradient(#fff, #e4effb);
    border-color: #8db2e3;
    border-radius: 3px 3px 0 0;
}

.doc-buttons {
    display: flex;
    align-items: center;
    gap: 14px;
    height: 24px;
    margin-left: auto;
    padding-right: 6px;
}

/* ribbon */
.ribbon {
    flex: none;
    display: flex;
    gap: 3px;
    height: 95px;
    padding: 1px 2px;
    background: linear-gradient(#dae6f4 0, #dae6f4 14px, #c7d9ee 17px, #e2f4fe 100%);
    border: 1px solid #8db2e3;
    border-bottom: 1px solid #8fdcec;
    border-radius: 4px;
}

.group {
    flex: none;
    display: flex;
    flex-direction: column;
    height: 91px;
    background: linear-gradient(#dde8f5 0, #d5e2f1 14px, #c8daee 16px, #dceaf8 72px);
    border: 1px solid #9dbfdb;
    border-radius: 3px;
}

.group h2 {
    flex: none;
    height: 18px;
    line-height: 17px;
    text-align: center;
    color: #3e6aaa;
    background: #c1d8f0;
}

.g-views { width: 291px; }
.g-show { width: 206px; }
.g-zoom { width: 166px; }
.g-window { width: 461px; }
.g-macro { width: 50px; }

.tools {
    flex: 1;
    min-height: 0;
    display: flex;
    padding: 1px 2px 1px 3px;
}

.g-zoom .tools, .g-window .tools {
    padding-left: 1px;
}

.big {
    flex: none;
    display: flex;
    flex-direction: column;
    align-items: center;
    height: 69px;
    padding-top: 2px;
    line-height: 15px;
}

.big span {
    margin-top: 4px;
}

.big .caret {
    vertical-align: middle;
}

.w40 { width: 40px; }
.w42 { width: 42px; }
.w44 { width: 44px; }
.w53 { width: 53px; }
.w54 { width: 54px; }
.w60 { width: 60px; }
.w80 { width: 80px; }

.big.on {
    background: linear-gradient(#fbd7a8 0, #fcc078 25px, #fda94c 27px, #ffe889 100%);
    border: 1px solid #b89553;
    border-radius: 2px;
    padding-top: 1px;
}

.sep {
    width: 2px;
    height: 56px;
    margin: 7px 4px 0;
    background: #a5c1e2;
    border-right: 1px solid #f3f8fd;
}

.checks {
    gap: 9px;
    padding: 0 6px;
}

.checks label {
    display: flex;
    align-items: center;
    gap: 7px;
    height: 22px;
}

.checks input {
    appearance: none;
    width: 13px;
    height: 13px;
    margin: 0;
    background: #f4f7fa;
    border: 1px solid #a6b4c6;
}

.checks input:checked::before {
    content: "";
    display: block;
    width: 4px;
    height: 8px;
    margin-left: 3px;
    border: solid #3c5a92;
    border-width: 0 2px 2px 0;
    transform: rotate(40deg);
}

.checks input:disabled {
    opacity: .7;
}

.off, button:disabled {
    color: #8d8d8d;
}

.small-col {
    padding: 0 0 0 2px;
}

.small-col button {
    display: flex;
    align-items: center;
    gap: 4px;
    height: 23px;
}

.small-col.first { width: 89px; }
.small-col.second { width: 122px; }

/* formula bar */
.formula-bar {
    flex: none;
    display: flex;
    height: 25px;
    margin-top: 2px;
    background: #fff;
    border: solid #5d8ab8;
    border-width: 1px 0;
}

.formula-bar input {
    min-width: 0;
    border: 0;
    background: none;
    font-family: "Noto Sans", "Noto Sans CJK KR", sans-serif;
    font-size: 14px;
    outline: none;
}

.name-box {
    display: flex;
    align-items: center;
    width: 177px;
    padding-right: 5px;
}

.name-box input {
    flex: 1;
    padding: 0 4px 0 0;
    text-align: center;
}

.fx {
    display: flex;
    align-items: center;
    justify-content: space-between;
    width: 93px;
    padding: 0 8px 0 5px;
    background: linear-gradient(#dfeafa, #a9c4ec);
    border: solid #5d8ab8;
    border-width: 0 1px;
    border-radius: 12px 0 0 12px;
}

.fx .dot {
    width: 9px;
    height: 9px;
    border-radius: 50%;
    background: linear-gradient(135deg, #9eaabd, #eef3fa);
}

.fx em {
    font: italic 700 15px "Liberation Serif", serif;
    color: #44546f;
}

.fx small {
    font-size: 11px;
}

.formula-bar .formula-input {
    flex: 1;
    padding: 0 8px 2px;
    font-size: 15px;
}

.expand {
    display: flex;
    align-items: center;
    justify-content: center;
    width: 16px;
    background: linear-gradient(#e0ebfa, #aec8ec);
    border: 1px solid #5d8ab8;
    border-width: 0 1px;
}

/* worksheet */
.workspace {
    flex: 1;
    min-height: 0;
    display: flex;
    margin-top: 2px;
    border-top: 1px solid #5d8ab8;
}

.sheet {
    flex: 1;
    min-width: 0;
    overflow: hidden;
    background: #fff;
}

table {
    width: 100%;
    table-layout: fixed;
    border-collapse: separate;
    border-spacing: 0;
    color: #000;
    font-size: 16px;
    font-weight: 500;
    text-align: center;
    white-space: nowrap;
}

.c-num { width: 23px; }
.c-a { width: 34px; }
.c-day { width: 107px; }
.c-n { width: 54px; }

th {
    padding: 0 0 1px;
    height: 20px;
    background: #e4ecf7;
    border: solid #9eb6ce;
    border-width: 0 1px 1px 0;
    color: #28405f;
    font: 400 12px/12px "Open Sans", sans-serif;
    vertical-align: bottom;
}

thead th {
    height: 15px;
    padding: 1px 0 0;
    background: linear-gradient(#f8fafc, #d5dde9);
    vertical-align: middle;
}

thead .corner {
    background: linear-gradient(135deg, #a9c4e9 0 68%, #e4ecf7 68%);
}

th.sel {
    background: #fdd08a;
    border-color: #f29536;
}

thead th.sel {
    background: linear-gradient(#f9d99f, #f1c15f);
}

td {
    padding: 0;
    height: 17px;
    line-height: 14px;
    border: solid #d0d7e5;
    border-width: 0 1px 1px 0;
}

.tall td { height: 22px; }
.short th, .short td { height: 15px; }
.low th { height: 17px; }

td.rest {
    background: repeating-linear-gradient(90deg, transparent 0 53px, #d0d7e5 53px 54px);
    border-right: 0;
}

/* page break right of column H */
tr td:nth-last-child(2) {
    border-right: 1px dashed #000;
}

.r-title td {
    height: 26px;
    border-bottom-color: #ffffcc;
}

.r-title .rest, .r-days .rest, .m .rest, .r-snack .rest {
    border-bottom: 1px solid #d0d7e5;
}

.r-title .title {
    font-size: 24px;
    line-height: 23px;
    padding-bottom: 2px;
    white-space: pre;
    box-shadow: inset 0 -1px #660066;
}

.r-days td, .m td, .r-snack td {
    height: 20px;
    padding-bottom: 3px;
    line-height: 16px;
    border-color: #fff;
    box-shadow: inset 1px 0 #660066, inset -1px 0 #660066;
}

.r-days td, .r-snack td {
    box-shadow: inset 0 0 0 1px #660066;
}

.r-days td {
    background: #ffffcc;
}

.r-days .sun {
    color: #f00;
}

.m td {
    border-bottom: 0;
}

.m.first td {
    box-shadow: inset 1px 0 #660066, inset -1px 0 #660066, inset 0 1px #660066;
}

.m.first .meal {
    border-bottom: 1px solid #fff;
    box-shadow: inset 0 0 0 1px #660066;
}

.m.last td {
    border-bottom: 1px solid #fff;
    box-shadow: inset 1px 0 #660066, inset -1px 0 #660066, inset 0 -1px #660066;
}

.m.end td {
    box-shadow: inset 1px 0 #660066, inset -1px 0 #660066, inset 0 -1px #000;
}

.r-days td:nth-last-child(2), .m td:nth-last-child(2), .r-snack td:nth-last-child(2) {
    border-right: 1px dotted #660066;
}

.breakfast { background: #ccffff; }
.lunch { background: #ffcccc; }
.dinner { background: #ffffcc; }

.r-snack td {
    height: 25px;
    background: #ccffcc;
}

.r-snack .cursor {
    position: relative;
    border-color: #8df58d;
    box-shadow: inset 0 0 0 1px #1a001a, inset 0 -2px #1a001a;
}

.cursor::after {
    content: "";
    position: absolute;
    right: -3px;
    bottom: -3px;
    width: 5px;
    height: 5px;
    background: #660066;
    border: 1px solid #fff;
}

.narrow {
    font-size: 14px;
    font-weight: 700;
}

.r-days .rest, .m .rest, .m.first .rest, .m.last .rest, .r-snack .rest {
    background: repeating-linear-gradient(90deg, transparent 0 53px, #d0d7e5 53px 54px);
    border-bottom: 1px solid #d0d7e5;
    box-shadow: inset 1px 0 #660066;
}

/* origin block */
.o td {
    padding-bottom: 2px;
    border-color: #000;
}

.o.short td {
    line-height: 12px;
}

.o .rest {
    border-bottom-color: #d0d7e5;
    box-shadow: inset 1px 0 #000;
}

.r-origin td {
    height: 20px;
    background: #c5d9f1;
    box-shadow: inset 0 1px #000;
    font-size: 13px;
    font-weight: 700;
}

.o.r-origin .rest {
    background: repeating-linear-gradient(90deg, transparent 0 53px, #d0d7e5 53px 54px);
    box-shadow: inset 1px 0 #000;
}

.o .edge {
    border-right: 1px dotted #000;
    box-shadow: inset -1px 0 #000;
}

.r-origin .edge {
    box-shadow: inset -1px 1px #000;
}

.o .origin {
    font-size: 14px;
    font-weight: 400;
    line-height: 20px;
    color: #101a2c;
    padding-bottom: 0;
    border-bottom-style: dotted;
    box-shadow: inset 1px 1px #000, inset 0 -1px #000;
}

.pink {
    background: #f2dcdb;
}

.o .spill {
    position: relative;
    z-index: 1;
    padding-left: 2px;
    font-size: 12px;
    font-weight: 700;
    text-align: left;
}

.short .rest {
    box-shadow: none;
}

.o .rest.semi {
    padding-left: 2px;
    color: #c0504d;
    font-size: 12px;
    text-align: left;
    box-shadow: none;
    border-right: 0;
}

.o .semi + .rest {
    box-shadow: none;
}

.o .note {
    padding-left: 1px;
    background: #ebf1de;
    border-bottom-style: dotted;
    box-shadow: inset 0 -1px #000, inset -1px 0 #000;
    font-size: 14px;
    font-weight: 700;
    white-space: pre;
}

.r-note .rest {
    border-bottom: 1px dashed #000;
}

.tall td:not(.rest) {
    box-shadow: inset 0 1px #000;
}

/* scroll bars */
.vscroll {
    flex: none;
    display: flex;
    flex-direction: column;
    width: 16px;
    background: #7796c2;
    border-left: 1px solid #5d8ab8;
}

.vscroll .split {
    height: 7px;
    background: #fff;
    border: 2px solid #a9c4e9;
}

.vscroll button {
    display: flex;
    align-items: center;
    justify-content: center;
    height: 17px;
    background: linear-gradient(90deg, #f3f5f9, #c3cde0);
    border: 1px solid #7387ad;
}

.vscroll .thumb {
    flex: 567;
    display: flex;
    align-items: center;
    justify-content: center;
    background: linear-gradient(90deg, #d8e8fc 0 35%, #a6c8f5 50%, #b9d5f8);
    border: 1px solid #3e67a8;
    border-radius: 2px;
}

.vscroll .thumb i {
    width: 8px;
    height: 8px;
    background: repeating-linear-gradient(#5a7396 0 1px, transparent 1px 2px);
}

.vscroll .track {
    flex: 38;
}

.bottom-bar {
    flex: none;
    display: flex;
    height: 17px;
    padding-right: 16px;
    background: #7ea0d8;
    border-bottom: 1px solid #5d8ab8;
}

.nav-arrows {
    display: flex;
    align-items: center;
    justify-content: space-around;
    width: 63px;
    padding: 0 1px;
    background: #c9ddf8;
}

.sheet-tabs {
    flex: 1;
    display: flex;
    background: linear-gradient(#8aa9d6, #a9c2e6);
}

.sheet-tabs button {
    position: relative;
    z-index: 0;
    width: 60px;
    padding: 0 0 2px 2px;
    font-size: 15px;
    line-height: 14px;
}

.sheet-tabs button::before {
    content: "";
    position: absolute;
    z-index: -1;
    top: 0;
    bottom: 1px;
    left: 4px;
    right: -4px;
    background: linear-gradient(#c3daf8, #dcebfd);
    border: solid #7d9cc8;
    border-width: 0 1px 1px;
    transform: skewX(-38deg);
}

.sheet-tabs .active::before {
    background: #fff;
}

.sheet-tabs .new {
    width: 34px;
    padding-left: 10px;
}

.hscroll {
    display: flex;
    align-items: stretch;
    width: 40%;
    background: #7796c2;
}

.hscroll .split {
    width: 7px;
    background: #fff;
    border: 2px solid #a9c4e9;
}

.hscroll button {
    display: flex;
    align-items: center;
    justify-content: center;
    width: 18px;
}

.hscroll .thumb {
    flex: 465;
    display: flex;
    align-items: center;
    justify-content: center;
    background: linear-gradient(#f7f8fb, #dfe4ee 45%, #b6c0d3);
    border: 1px solid #54709c;
    border-radius: 2px;
}

.hscroll .thumb i {
    width: 8px;
    height: 7px;
    background: repeating-linear-gradient(90deg, #6a7590 0 1px, transparent 1px 2px);
}

.hscroll .track {
    flex: 56;
}

/* status bar */
.status {
    flex: none;
    display: flex;
    justify-content: space-between;
    height: 21px;
    background: linear-gradient(#d5e6fd 0, #bdd6f8 7px, #a9caf4 8px, #dcebfe 19px);
}

.ready {
    width: 40px;
    padding-left: 7px;
    line-height: 19px;
    color: #23365a;
    border-right: 1px solid #8fb0dc;
}

.status-right {
    display: flex;
    align-items: center;
    width: 250px;
    padding: 0 5px;
    background: linear-gradient(#b9d5f8 0, #8fb4e6 8px, #759fd8 9px, #8cb0e2);
    border-left: 1px solid #4c72a8;
}

.view-buttons {
    display: flex;
    height: 17px;
    background: #b4cdf0;
    border: 1px solid #5d7fb4;
}

.view-buttons button {
    display: flex;
    align-items: center;
    justify-content: center;
    width: 18px;
}

.view-buttons .on {
    background: linear-gradient(#fcd9a0, #ffe187);
}

.percent {
    width: 44px;
    padding-bottom: 2px;
    font-size: 12px;
    color: #1b366d;
}

.round {
    width: 16px;
    margin-left: 6px;
}

.zoom-slider {
    flex: 1;
    display: flex;
    align-items: center;
    justify-content: center;
    gap: 9px;
    padding-right: 15px;
    background: linear-gradient(#46689e, #46689e) center / 100% 1px no-repeat;
}

.zoom-slider i {
    width: 1px;
    height: 7px;
    background: #46689e;
}

.zoom-slider + .round {
    margin-left: 0;
}

/* taskbar */
.taskbar {
    flex: none;
    display: flex;
    align-items: center;
    height: 40px;
    padding-left: 8px;
    background: linear-gradient(90deg, #8295ab 0, #8295ab 50px, #a6bfdb 90px, #a6bfdb calc(100% - 370px), #8294ab calc(100% - 340px));
    border-top: 1px solid #33425a;
}

.start {
    width: 38px;
    margin-right: 13px;
}

.task {
    display: flex;
    align-items: center;
    justify-content: center;
    width: 60px;
    height: 39px;
    margin-right: 2px;
}

.task.open {
    background: linear-gradient(135deg, #e3eaf3, #b3c6dc);
    border: 1px solid #4c5d75;
    border-radius: 3px;
}

.stacked {
    width: 55px;
    margin-left: 0;
    box-shadow: inset -1px 0 #f5f8fb, 3px 0 0 #b8cae0, 4px 0 0 #4c5d75;
}

.tray {
    display: flex;
    align-items: center;
    gap: 8px;
    margin-left: auto;
    height: 100%;
    color: #fff;
}

.tray > svg:first-child {
    margin-right: -4px;
}

.ime {
    margin-right: -4px;
    padding-bottom: 4px;
    font-size: 18px;
}

.tray .up {
    margin: 0 2px 0 8px;
}

.clock {
    width: 90px;
    margin-right: -8px;
    text-align: center;
    font-size: 13px;
    line-height: 17px;
}

.desktop {
    width: 15px;
    height: 100%;
    background: linear-gradient(160deg, #9fabbb, #56667c 50%, #74859a);
    border: 1px solid #3d4a5d;
}
```
